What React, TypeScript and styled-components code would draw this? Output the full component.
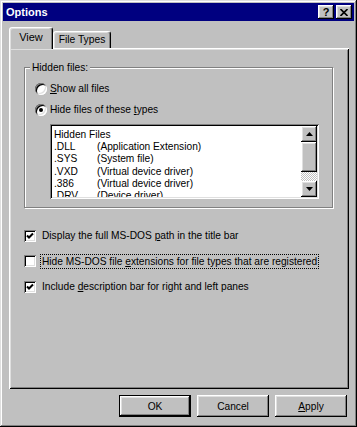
import React from 'react';
import styled, { createGlobalStyle } from 'styled-components';

const Global = createGlobalStyle`
  html, body { margin: 0; padding: 0; background: #c0c0c0; }
  body {
    font-family: "Liberation Sans", Arial, sans-serif;
    font-size: 10.2px;
    color: #000;
    -webkit-font-smoothing: none;
  }
  * { box-sizing: border-box; }
`;

const raised = `
  box-shadow: inset -1px -1px #000, inset 1px 1px #fff, inset -2px -2px #808080, inset 2px 2px #dfdfdf;
`;

const sunken = `
  box-shadow: inset 1px 1px #808080, inset -1px -1px #fff, inset 2px 2px #000, inset -2px -2px #dfdfdf;
`;

const Dialog = styled.div`
  width: 357px;
  height: 427px;
  background: #c0c0c0;
  padding: 3px;
  box-shadow: inset -1px -1px #000, inset 1px 1px #dfdfdf, inset -2px -2px #808080, inset 2px 2px #fff;
  display: flex;
  flex-direction: column;
`;

const TitleBar = styled.div`
  height: 18px;
  background: #000080;
  color: #fff;
  font-weight: bold;
  font-size: 11px;
  display: flex;
  align-items: center;
  justify-content: space-between;
  padding: 0 2px 0 3px;
`;

const TitleText = styled.span`
  line-height: 18px;
`;

const TitleButtons = styled.div`
  display: flex;
  gap: 2px;
`;

const TitleButton = styled.div`
  width: 16px;
  height: 14px;
  background: #c0c0c0;
  ${raised}
  color: #000;
  font-size: 11px;
  font-weight: bold;
  display: flex;
  align-items: center;
  justify-content: center;
  line-height: 14px;
`;

const Body = styled.div`
  flex: 1;
  padding: 6px 5px 0 6px;
  display: flex;
  flex-direction: column;
`;

const TabStrip = styled.div`
  height: 21px;
  display: flex;
  align-items: flex-end;
  position: relative;
  z-index: 2;
`;

const Tab = styled.div<{ $active?: boolean; $w: number }>`
  width: ${p => p.$w}px;
  height: ${p => (p.$active ? 22 : 17)}px;
  margin-bottom: ${p => (p.$active ? -1 : 0)}px;
  background: #c0c0c0;
  border-style: solid;
  border-width: 1px 1px 0 1px;
  border-color: #fff #000 transparent #fff;
  border-radius: 3px 3px 0 0;
  box-shadow: inset -1px 0 #808080, inset 1px 1px #dfdfdf;
  font-size: ${p => (p.$active ? 11 : 10.3)}px;
  display: flex;
  justify-content: center;
  padding-top: ${p => (p.$active ? 3 : 1)}px;
  line-height: 13px;
`;

const Panel = styled.div`
  width: 340px;
  height: 341px;
  background: #c0c0c0;
  box-shadow: inset 1px 1px #fff, inset -1px -1px #000, inset 2px 2px #dfdfdf, inset -2px -2px #808080;
  padding: 0 16px 0 15px;
  display: flex;
  flex-direction: column;
`;

const Group = styled.div`
  position: relative;
  margin-top: 19px;
  height: 141px;
  border: 1px solid #808080;
  box-shadow: inset 1px 1px #fff, 1px 1px #fff;
  padding: 14px 0 0 10px;
  display: flex;
  flex-direction: column;
`;

const Legend = styled.span`
  position: absolute;
  top: -7px;
  left: 5px;
  padding: 0 2px;
  background: #c0c0c0;
  line-height: 13px;
`;

const OptionRow = styled.label<{ $mt?: number }>`
  display: flex;
  align-items: center;
  gap: 3px;
  height: 13px;
  margin-top: ${p => p.$mt ?? 0}px;
  line-height: 13px;
`;

const Radio = styled.span<{ $checked?: boolean }>`
  position: relative;
  width: 12px;
  height: 12px;
  border-radius: 50%;
  background: #fff;
  box-shadow: inset 1px 1px 0 #808080, inset -1px -1px 0 #fff, inset 2px 2px 0 #000, inset -2px -2px 0 #dfdfdf;
  flex: none;
  &::after {
    content: '';
    display: ${p => (p.$checked ? 'block' : 'none')};
    position: absolute;
    left: 4px;
    top: 4px;
    width: 4px;
    height: 4px;
    border-radius: 50%;
    background: #000;
  }
`;

const ListBox = styled.div`
  margin: 8px 0 0 15px;
  width: 269px;
  height: 75px;
  background: #fff;
  ${sunken}
  padding: 2px;
  display: flex;
`;

const ListContent = styled.div`
  flex: 1;
  overflow: hidden;
  padding: 2.5px 0 0 2px;
  display: grid;
  grid-template-columns: 43px 1fr;
  grid-auto-rows: 12.4px;
  align-content: start;
  line-height: 12.4px;
  white-space: nowrap;
`;

const ListHeader = styled.div`
  grid-column: 1 / span 2;
`;

const Cell = styled.div``;

const ScrollBar = styled.div`
  width: 16px;
  display: flex;
  flex-direction: column;
`;

const ScrollButton = styled.div`
  width: 16px;
  height: 16px;
  background: #c0c0c0;
  ${raised}
  display: flex;
  align-items: center;
  justify-content: center;
  flex: none;
`;

const Thumb = styled.div`
  width: 16px;
  height: 30px;
  background: #c0c0c0;
  ${raised}
  flex: none;
`;

const Track = styled.div`
  flex: 1;
  background-color: #fff;
  background-image: repeating-conic-gradient(#c0c0c0 0 25%, #fff 0 50%);
  background-size: 2px 2px;
`;

const Checks = styled.div`
  margin-top: 21px;
  display: flex;
  flex-direction: column;
  gap: 12.5px;
`;

const CheckRow = styled.label`
  display: flex;
  align-items: center;
  gap: 5px;
  height: 13px;
  line-height: 13px;
  white-space: nowrap;
`;

const CheckBox = styled.span`
  width: 12px;
  height: 12px;
  background: #fff;
  ${sunken}
  flex: none;
  display: flex;
  align-items: center;
  justify-content: center;
`;

const CheckLabel = styled.span<{ $focus?: boolean }>`
  padding: 0 1px;
  outline: ${p => (p.$focus ? '1px dotted #000' : 'none')};
  outline-offset: 0;
`;

const U = styled.span`
  text-decoration: underline;
  text-underline-offset: 1px;
`;

const ButtonRow = styled.div`
  margin-top: 6px;
  display: flex;
  justify-content: flex-end;
  gap: 6px;
  padding-right: 2px;
`;

const Button = styled.div<{ $default?: boolean }>`
  width: 72px;
  height: 22px;
  background: #c0c0c0;
  border: ${p => (p.$default ? '1px solid #000' : 'none')};
  ${raised}
  display: flex;
  align-items: center;
  justify-content: center;
  line-height: 13px;
`;

const Check = () => (
  <svg width="8" height="8" viewBox="0 0 8 8">
    <path d="M1 3.5 L3 5.5 L7 1.5" fill="none" stroke="#000" strokeWidth="2" />
  </svg>
);

const ArrowUp = () => (
  <svg width="7" height="4" viewBox="0 0 7 4">
    <path d="M3.5 0 L7 4 L0 4 Z" fill="#000" />
  </svg>
);

const ArrowDown = () => (
  <svg width="7" height="4" viewBox="0 0 7 4">
    <path d="M0 0 L7 0 L3.5 4 Z" fill="#000" />
  </svg>
);

const CloseGlyph = () => (
  <svg width="8" height="7" viewBox="0 0 8 7">
    <path d="M0.5 0 L7.5 7 M7.5 0 L0.5 7" stroke="#000" strokeWidth="1.6" />
  </svg>
);

const files: [string, string][] = [
  ['.DLL', '(Application Extension)'],
  ['.SYS', '(System file)'],
  ['.VXD', '(Virtual device driver)'],
  ['.386', '(Virtual device driver)'],
  ['.DRV', '(Device driver)'],
];

export default function App() {
  return (
    <>
      <Global />
      <Dialog>
        <TitleBar>
          <TitleText>Options</TitleText>
          <TitleButtons>
            <TitleButton>?</TitleButton>
            <TitleButton>
              <CloseGlyph />
            </TitleButton>
          </TitleButtons>
        </TitleBar>
        <Body>
          <TabStrip>
            <Tab $active $w={44}>View</Tab>
            <Tab $w={58}>File Types</Tab>
          </TabStrip>
          <Panel>
            <Group>
              <Legend>Hidden files:</Legend>
              <OptionRow>
                <Radio />
                <span>
                  <U>S</U>how all files
                </span>
              </OptionRow>
              <OptionRow $mt={8}>
                <Radio $checked />
                <span>
                  Hide files of these <U>t</U>ypes
                </span>
              </OptionRow>
              <ListBox>
                <ListContent>
                  <ListHeader>Hidden Files</ListHeader>
                  {files.map(([ext, desc]) => (
                    <React.Fragment key={ext}>
                      <Cell>{ext}</Cell>
                      <Cell>{desc}</Cell>
                    </React.Fragment>
                  ))}
                </ListContent>
                <ScrollBar>
                  <ScrollButton>
                    <ArrowUp />
                  </ScrollButton>
                  <Thumb />
                  <Track />
                  <ScrollButton>
                    <ArrowDown />
                  </ScrollButton>
                </ScrollBar>
              </ListBox>
            </Group>
            <Checks>
              <CheckRow>
                <CheckBox>
                  <Check />
                </CheckBox>
                <CheckLabel>
                  Display the full MS-DOS <U>p</U>ath in the title bar
                </CheckLabel>
              </CheckRow>
              <CheckRow>
                <CheckBox />
                <CheckLabel $focus>
                  Hide MS-DOS file <U>e</U>xtensions for file types that are registered
                </CheckLabel>
              </CheckRow>
              <CheckRow>
                <CheckBox>
                  <Check />
                </CheckBox>
                <CheckLabel>
                  Include <U>d</U>escription bar for right and left panes
                </CheckLabel>
              </CheckRow>
            </Checks>
          </Panel>
          <ButtonRow>
            <Button $default>OK</Button>
            <Button>Cancel</Button>
            <Button>
              <span>
                <U>A</U>pply
              </span>
            </Button>
          </ButtonRow>
        </Body>
      </Dialog>
    </>
  );
}
